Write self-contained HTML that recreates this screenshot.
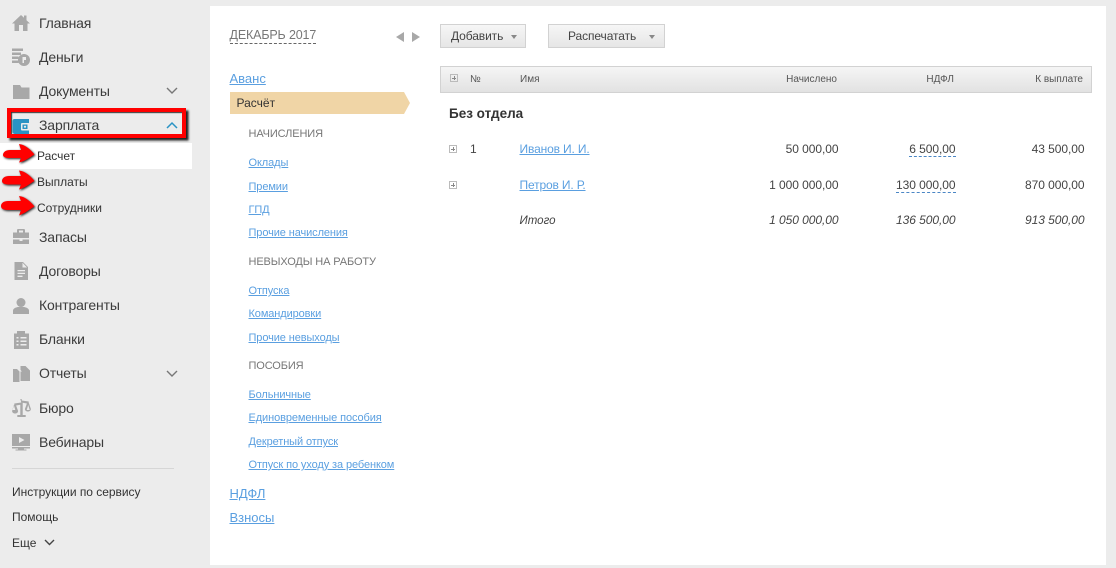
<!DOCTYPE html>
<html><head><meta charset="utf-8"><style>
*{box-sizing:border-box}
html,body{margin:0;padding:0}
body{width:1116px;height:568px;background:#ececec;position:relative;overflow:hidden;font-family:"Liberation Sans",sans-serif;color:#444}
.t{position:absolute;white-space:nowrap;line-height:16px}
.m{font-size:14px;left:39px;color:#3c3c3c;letter-spacing:-.15px}
.s{font-size:12px;left:37px;color:#333}
.b{font-size:12px;left:12px;color:#333}
a{color:#5a9fe0;text-decoration:underline}
.l{font-size:11px;left:248.500px;letter-spacing:-.1px}
.h{font-size:11px;left:248.500px;color:#777;letter-spacing:-.12px}
.L{font-size:13px;left:229.500px}
.n{font-size:12px;text-align:right;color:#444;letter-spacing:-.06px}
.c1{right:277.500px}.c2{right:160.500px}.c3{right:31.500px}
.hd{font-size:10px;color:#555}
.d{border-bottom:1px dashed #4a86c5;line-height:14px;height:15px}
.btn{position:absolute;top:24px;height:24px;background:linear-gradient(#f6f6f6,#e6e6e6);border:1px solid #d2d2d2;font-size:12px;color:#444;line-height:22px;letter-spacing:-.1px}
.tri{position:absolute;top:10px;border-left:3.500px solid transparent;border-right:3.500px solid transparent;border-top:4px solid #888}
.p{position:absolute;width:8px;height:8px;border:1px solid #bbb}
.p:before{content:"";position:absolute;left:1px;top:2.500px;width:4px;height:1px;background:#888}
.p:after{content:"";position:absolute;left:2.500px;top:1px;width:1px;height:4px;background:#888}
svg{position:absolute;overflow:visible}
</style></head><body>
<div style="position:absolute;left:210px;top:6px;width:896px;height:559px;background:#fff"></div>

<div style="position:absolute;left:0;top:143px;width:192px;height:26px;background:#fff"></div>

<svg style="left:0;top:0" width="210" height="560" fill="#a8a8a8">
<path d="M12 23.500 21 15l3 2.800V15.500h2.500v4.700L30 23.500h-2.500V31H23v-6h-4v6h-4.500v-7.500z"/>
<path d="M12 48.500h11v2.500H12zM12 52.500h9v2.500h-9zM12 56.500h6.500v2.500H12zM12 60.500h6.500v2.500H12z"/>
<circle cx="24" cy="60" r="6"/>
<path d="M22.500 57h3.500v3h-2v3h-1.500z" fill="#ececec"/>
<path d="M13 85h7l1.500 2.500H29.500V99H13z"/>
<path d="M12.500 121c0-1 .7-2 2-2H29v15H15c-1.500 0-2.500-1-2.500-2z" fill="#2a93c4"/>
<rect x="21" y="123" width="9" height="7.500" rx="1" fill="#ececec"/>
<rect x="22.500" y="124.500" width="5" height="4.500" fill="#2a93c4"/>
<circle cx="25" cy="126.700" r="1.100" fill="#ececec"/>
<path d="M17 232.500v-2.300c0-.8.500-1.200 1.300-1.200h5.400c.8 0 1.300.4 1.300 1.200v2.300h4v5.500H13v-5.500zm2 0h4v-2h-4zM13 239.500h6.500v1.500h3v-1.500H29v4.500H13z"/>
<path d="M14.500 262h8.500l5 5v13H14.500zm8 .8V267.500h4.500zM17.500 270h7.500v1.200h-7.500zm0 2.800h7.500V274h-7.500zm0 2.800h5V277h-5z" fill-rule="evenodd"/>
<circle cx="21" cy="302.500" r="4.500"/>
<path d="M13 314v-3.500c0-2.300 3.500-3.800 8-3.800s8 1.500 8 3.800v3.500z"/>
<path d="M14 333.500h3V331h8v2.500h4V349H14zM16.500 337v1.500h2V337zm4 0v1.500h6V337zm-4 3.500V342h2v-1.500zm4 0V342h6v-1.500zm-4 3.500v1.500h2V344zm4 0v1.500h6V344z" fill-rule="evenodd"/>
<path d="M13 369h4l2.500 2.500V382H13zM20.500 366h5l4.500 4.500V381h-9.500v-9.500L22 371.500l-1.500-1.500z"/>
<path d="M20.300 399h1.400v1.500l7 1v1l2.200 6.500c0 1.500-1.400 2.500-3 2.500s-3-1-3-2.500l2-5.500-4.200-.7V415h3v2h-8.400v-2h3v-10.200l-4.200.7 2 5.500c0 1.500-1.400 2.500-3 2.500s-3-1-3-2.500l2.200-6.500v-1l7-1zM13.800 405 12.300 410h3zM28.200 405 26.700 410h3z" fill-rule="evenodd"/>
<path d="M12 434h18v12H12zM12 447h18v1.500H24v1h2.500v1h-11v-1H18v-1h-6zM19 437v6l5.500-3z" fill-rule="evenodd"/>
<path d="M167 88l5 5 5-5M167 371l5 5 5-5" fill="none" stroke="#777" stroke-width="1.400"/>
<path d="M167 128l5-5 5 5" fill="none" stroke="#2a93c4" stroke-width="1.500"/>
<path d="M45 540l4.500 4.500 4.500-4.500" fill="none" stroke="#444" stroke-width="1.400"/>
</svg>

<div class="t m" style="top:15px">Главная</div>
<div class="t m" style="top:49px">Деньги</div>
<div class="t m" style="top:83px">Документы</div>
<div class="t m" style="top:117px">Зарплата</div>
<div class="t s" style="top:148px">Расчет</div>
<div class="t s" style="top:174px">Выплаты</div>
<div class="t s" style="top:200px">Сотрудники</div>
<div class="t m" style="top:229px">Запасы</div>
<div class="t m" style="top:263px">Договоры</div>
<div class="t m" style="top:297px">Контрагенты</div>
<div class="t m" style="top:331px">Бланки</div>
<div class="t m" style="top:365px">Отчеты</div>
<div class="t m" style="top:400px">Бюро</div>
<div class="t m" style="top:434px">Вебинары</div>
<div style="position:absolute;left:12px;top:468px;width:162px;height:1px;background:#d6d6d6"></div>
<div class="t b" style="top:484px;letter-spacing:-.03px">Инструкции по сервису</div>
<div class="t b" style="top:509px">Помощь</div>
<div class="t b" style="top:535px">Еще</div>

<div style="position:absolute;left:7px;top:108px;width:179px;height:30px;border:4px solid #f00;box-shadow:2.500px 2.500px 2px #222,inset 1px 1px 1px #333"></div>
<svg style="left:0;top:0;filter:drop-shadow(1.500px 1.500px 1px #222)" width="60" height="220" fill="#f00">
<path d="M3 155c0-3 3-5 7-5h11l-2-6c7 1 12 6 15.500 10.500-5 3-10 7-15.500 8l2-4.500H10c-4 0-7-1-7-3z"/>
<path d="M2 181c0-3 3-5 7-5h12l-2-5.500c7 1 12 6 15.500 10.500-5 3-10 7-15.500 8.500l2-5H9c-4 0-7-1-7-3.500z"/>
<path d="M1 206c0-3 3-5 7-5h13l-2-5c7 1 12 6 15.500 10.500-5 3-10 7-15.500 9l2-5.500H8c-4 0-7-1-7-4z"/>
</svg>

<div class="t" style="left:229.500px;top:28px;font-size:12.500px;color:#777;border-bottom:1px dashed #666;line-height:15px;height:16px;letter-spacing:-.15px">ДЕКАБРЬ 2017</div>
<svg style="left:396px;top:32px" width="24" height="10" fill="#a8a8a8"><path d="M0 5 8 0v10zM16 0l8 5-8 5z"/></svg>

<div class="t L" style="top:71px"><a>Аванс</a></div>
<svg style="left:230px;top:92px" width="181" height="22"><path d="M0 0H174L180 11 174 22H0z" fill="#f0d5a6"/></svg>
<div class="t" style="left:236.500px;top:95px;font-size:12px;color:#333">Расчёт</div>
<div class="t h" style="top:126px">НАЧИСЛЕНИЯ</div>
<div class="t l" style="top:155px"><a>Оклады</a></div>
<div class="t l" style="top:179px"><a>Премии</a></div>
<div class="t l" style="top:202px"><a>ГПД</a></div>
<div class="t l" style="top:225px"><a>Прочие начисления</a></div>
<div class="t h" style="top:254px">НЕВЫХОДЫ НА РАБОТУ</div>
<div class="t l" style="top:283px"><a>Отпуска</a></div>
<div class="t l" style="top:306px"><a>Командировки</a></div>
<div class="t l" style="top:330px"><a>Прочие невыходы</a></div>
<div class="t h" style="top:358px">ПОСОБИЯ</div>
<div class="t l" style="top:387px"><a>Больничные</a></div>
<div class="t l" style="top:410px"><a>Единовременные пособия</a></div>
<div class="t l" style="top:434px"><a>Декретный отпуск</a></div>
<div class="t l" style="top:457px"><a>Отпуск по уходу за ребенком</a></div>
<div class="t L" style="top:486px"><a>НДФЛ</a></div>
<div class="t L" style="top:510px"><a>Взносы</a></div>

<div class="btn" style="left:440px;width:86px;padding-left:10px">Добавить<span class="tri" style="left:70px"></span></div>
<div class="btn" style="left:548px;width:117px;padding-left:19px">Распечатать<span class="tri" style="left:100px"></span></div>

<div style="position:absolute;left:440px;top:66px;width:652px;height:27px;background:linear-gradient(#f5f5f5,#e2e2e2);border:1px solid #d2d2d2"></div>
<span class="p" style="left:450px;top:74px"></span>
<div class="t hd" style="left:470px;top:72px">№</div>
<div class="t hd" style="left:520px;top:72px">Имя</div>
<div class="t hd" style="right:279px;top:72px">Начислено</div>
<div class="t hd" style="right:162px;top:72px">НДФЛ</div>
<div class="t hd" style="right:33px;top:72px">К выплате</div>

<div class="t" style="left:449px;top:106px;font-size:13.500px;font-weight:bold;color:#333">Без отдела</div>

<span class="p" style="left:449px;top:145px"></span>
<div class="t" style="left:470px;top:141px;font-size:12px">1</div>
<div class="t" style="left:519.500px;top:141px;font-size:12px;letter-spacing:-.15px"><a>Иванов И. И.</a></div>
<div class="t n c1" style="top:141px">50 000,00</div>
<div class="t n c2 d" style="top:142px">6 500,00</div>
<div class="t n c3" style="top:141px">43 500,00</div>

<span class="p" style="left:449px;top:181px"></span>
<div class="t" style="left:519.500px;top:177px;font-size:12px;letter-spacing:-.15px"><a>Петров И. Р.</a></div>
<div class="t n c1" style="top:177px">1 000 000,00</div>
<div class="t n c2 d" style="top:178px">130 000,00</div>
<div class="t n c3" style="top:177px">870 000,00</div>

<div class="t" style="left:519.500px;top:213px;font-size:11.500px;font-style:italic">Итого</div>
<div class="t n c1" style="top:212px;font-style:italic">1 050 000,00</div>
<div class="t n c2" style="top:212px;font-style:italic">136 500,00</div>
<div class="t n c3" style="top:212px;font-style:italic">913 500,00</div>
</body></html>
